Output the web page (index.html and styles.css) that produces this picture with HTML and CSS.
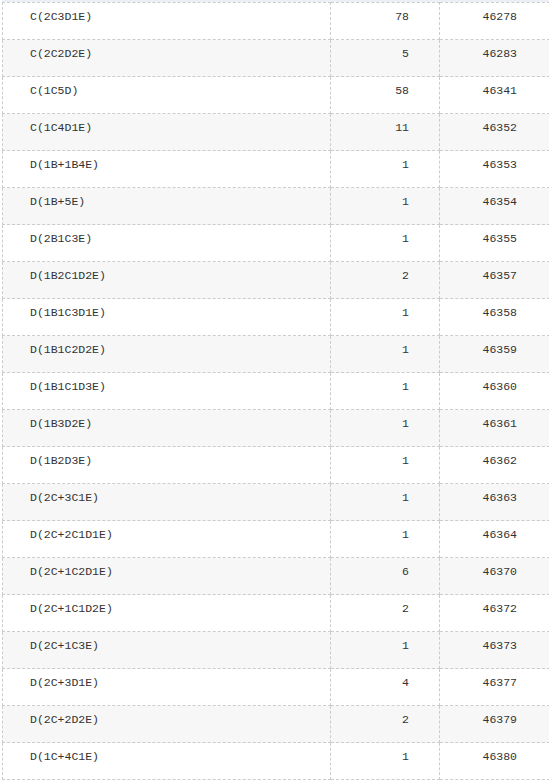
FILE: index.html
```html
<!DOCTYPE html>
<html>
<head>
<meta charset="utf-8">
<link rel="stylesheet" href="styles.css">
</head>
<body>
<div class="strip"></div>
<table class="grid">
<colgroup><col class="c1"><col class="c2"><col class="c3"></colgroup>
<tbody>
<tr><td class="name">C(2C3D1E)</td><td class="num">78</td><td class="num id">46278</td></tr>
<tr><td class="name">C(2C2D2E)</td><td class="num">5</td><td class="num id">46283</td></tr>
<tr><td class="name">C(1C5D)</td><td class="num">58</td><td class="num id">46341</td></tr>
<tr><td class="name">C(1C4D1E)</td><td class="num">11</td><td class="num id">46352</td></tr>
<tr><td class="name">D(1B+1B4E)</td><td class="num">1</td><td class="num id">46353</td></tr>
<tr><td class="name">D(1B+5E)</td><td class="num">1</td><td class="num id">46354</td></tr>
<tr><td class="name">D(2B1C3E)</td><td class="num">1</td><td class="num id">46355</td></tr>
<tr><td class="name">D(1B2C1D2E)</td><td class="num">2</td><td class="num id">46357</td></tr>
<tr><td class="name">D(1B1C3D1E)</td><td class="num">1</td><td class="num id">46358</td></tr>
<tr><td class="name">D(1B1C2D2E)</td><td class="num">1</td><td class="num id">46359</td></tr>
<tr><td class="name">D(1B1C1D3E)</td><td class="num">1</td><td class="num id">46360</td></tr>
<tr><td class="name">D(1B3D2E)</td><td class="num">1</td><td class="num id">46361</td></tr>
<tr><td class="name">D(1B2D3E)</td><td class="num">1</td><td class="num id">46362</td></tr>
<tr><td class="name">D(2C+3C1E)</td><td class="num">1</td><td class="num id">46363</td></tr>
<tr><td class="name">D(2C+2C1D1E)</td><td class="num">1</td><td class="num id">46364</td></tr>
<tr><td class="name">D(2C+1C2D1E)</td><td class="num">6</td><td class="num id">46370</td></tr>
<tr><td class="name">D(2C+1C1D2E)</td><td class="num">2</td><td class="num id">46372</td></tr>
<tr><td class="name">D(2C+1C3E)</td><td class="num">1</td><td class="num id">46373</td></tr>
<tr><td class="name">D(2C+3D1E)</td><td class="num">4</td><td class="num id">46377</td></tr>
<tr><td class="name">D(2C+2D2E)</td><td class="num">2</td><td class="num id">46379</td></tr>
<tr><td class="name">D(1C+4C1E)</td><td class="num">1</td><td class="num id">46380</td></tr>
</tbody>
</table>
</body>
</html>
```

FILE: styles.css
```css
html, body {
  margin: 0;
  padding: 0;
  background: #ffffff;
}
.strip {
  height: 2px;
  margin-left: 2px;
  background: #eceff5;
}
.grid {
  margin-left: 2px;
  width: 547px;
  border-collapse: collapse;
  table-layout: fixed;
  font-family: "Liberation Mono", "DejaVu Sans Mono", monospace;
  font-size: 11.5px;
  line-height: 14px;
  color: #333333;
}
.c1 { width: 328px; }
.c2 { width: 109px; }
.c3 { width: 110px; }
.grid td {
  border: 1px dashed #cccccc;
  padding: 7px 0 15px 0;
  vertical-align: top;
  white-space: nowrap;
}
.grid tr:nth-child(even) td {
  background: #f7f7f7;
}
.grid td.name {
  padding-left: 27px;
}
.grid td.num {
  text-align: right;
  padding-right: 30px;
}
.grid td.id {
  padding-right: 32px;
}
```
